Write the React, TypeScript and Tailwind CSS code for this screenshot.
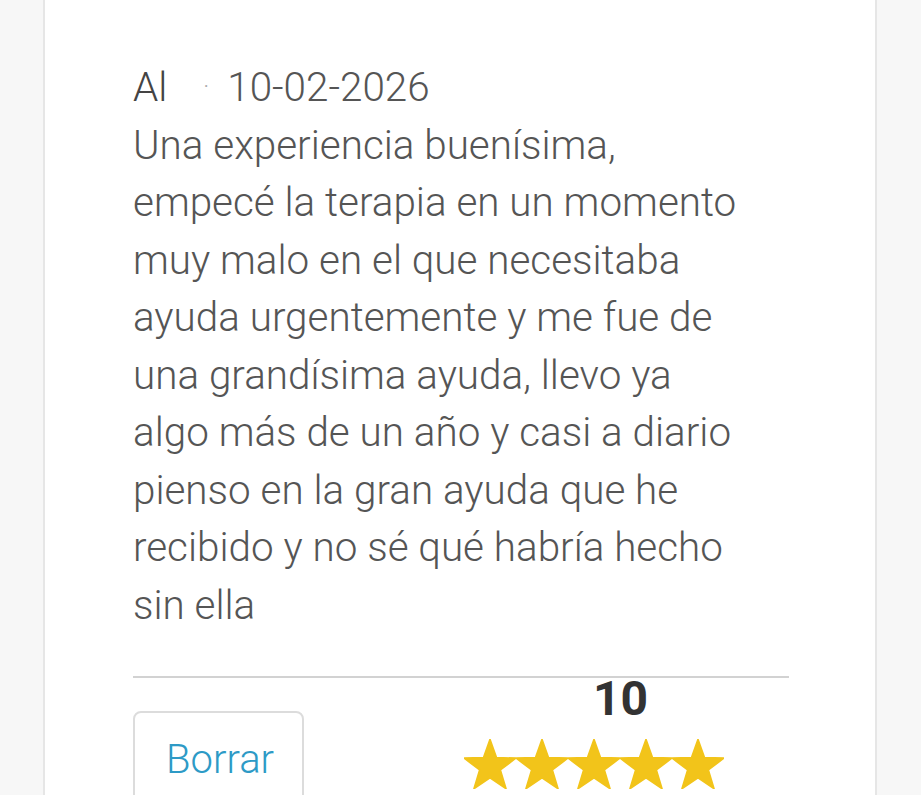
import React from 'react';

const review = {
  author: 'Al',
  date: '10-02-2026',
  text: 'Una experiencia buenísima, empecé la terapia en un momento muy malo en el que necesitaba ayuda urgentemente y me fue de una grandísima ayuda, llevo ya algo más de un año y casi a diario pienso en la gran ayuda que he recibido y no sé qué habría hecho sin ella',
  score: 10,
  stars: 5,
};

function Star() {
  return (
    <svg viewBox="0 0 100 95" className="w-[52px] h-[50px] shrink-0">
      <polygon
        points="50,0 62.5,35 100,36.2 70,59 80.9,95.1 50,74 19.1,95.1 30,59 0,36.2 37.5,35"
        fill="#f2c41a"
        strokeLinejoin="round"
        stroke="#f2c41a"
        strokeWidth="3"
      />
    </svg>
  );
}

export default function App() {
  return (
    <div className="min-h-[795px] bg-[#f7f7f7] overflow-hidden" style={{ fontFamily: 'Roboto, "Liberation Sans", sans-serif' }}>
      <div className="ml-[43px] w-[834px] min-h-[795px] bg-white border-x-2 border-[#e6e6e6] pl-[88px] pr-[86px] pt-[59px]">
        <div className="text-[40.4px] leading-[57.5px] text-[#555] font-light">
          <div className="whitespace-nowrap">
            <span className="text-[#444]">{review.author}</span>
            <span className="inline-block w-[36px]" />
            <span className="text-[#aaa] text-[24px] align-top">·</span>
            <span className="ml-[18px]">{review.date}</span>
          </div>
          <p className="pr-[40px]">{review.text}</p>
        </div>

        <div className="mt-[42px] border-t-2 border-[#d2d2d2]" />

        <div className="flex items-start">
          <button className="mt-[33px] w-[171px] h-[100px] border-2 border-[#dcdcdc] rounded-lg flex items-start pt-[18px] pl-[31px] text-[40px] leading-[57px] font-light text-[#2d9ac6]">
            Borrar
          </button>
          <div className="ml-[160px] flex flex-col">
            <span className="pl-[129px] text-[48px] leading-none font-bold text-[#333] mt-[-3px]">{review.score}</span>
            <div className="flex mt-[16px]">
              {Array.from({ length: review.stars }).map((_, i) => (
                <Star key={i} />
              ))}
            </div>
          </div>
        </div>
      </div>
    </div>
  );
}
